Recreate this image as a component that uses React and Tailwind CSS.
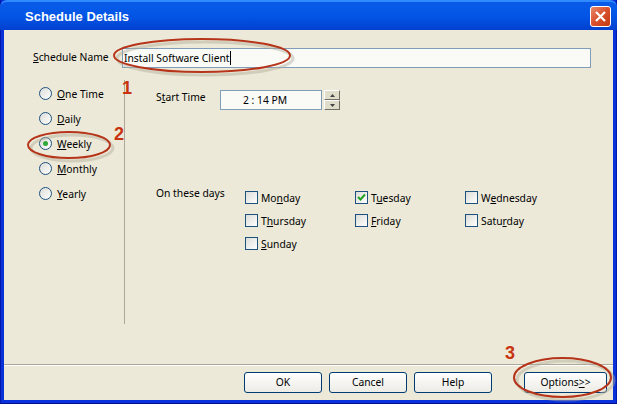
import React from "react";

const RADIOS = [
	{ pre: "", key: "O", rest: "ne Time" },
	{ pre: "", key: "D", rest: "aily" },
	{ pre: "", key: "W", rest: "eekly", checked: true },
	{ pre: "", key: "M", rest: "onthly" },
	{ pre: "", key: "Y", rest: "early" },
];

const DAYS = [
	{ pre: "Mo", key: "n", rest: "day" },
	{ pre: "T", key: "u", rest: "esday", checked: true },
	{ pre: "W", key: "e", rest: "dnesday" },
	{ pre: "T", key: "h", rest: "ursday" },
	{ pre: "", key: "F", rest: "riday" },
	{ pre: "Satu", key: "r", rest: "day" },
	{ pre: "", key: "S", rest: "unday" },
];

function Label({ pre, k, rest, className = "" }) {
	return (
		<span className={className}>
			{pre}
			<u>{k}</u>
			{rest}
		</span>
	);
}

function Radio({ item }) {
	return (
		<div className="flex items-center gap-[5px] h-[25px]">
			<div className="w-[13px] h-[13px] rounded-full border border-[#1c5180] bg-gradient-to-br from-[#dcdcd7] to-white flex items-center justify-center shrink-0">
				{item.checked && (
					<div className="w-[5px] h-[5px] rounded-full bg-[#2fa83a]" />
				)}
			</div>
			<Label className="mt-[2px]" pre={item.pre} k={item.key} rest={item.rest} />
		</div>
	);
}

function Day({ item }) {
	return (
		<div className="flex items-center gap-[3px] h-[13px]">
			<div className="w-[13px] h-[13px] border border-[#1c5180] bg-gradient-to-br from-[#dcdcd7] to-white flex items-center justify-center shrink-0">
				{item.checked && (
					<svg width="9" height="9" viewBox="0 0 9 9">
						<path d="M1 4 L3.5 6.5 L8 1.5" fill="none" stroke="#21a121" strokeWidth="2" />
					</svg>
				)}
			</div>
			<Label className="mt-[2px]" pre={item.pre} k={item.key} rest={item.rest} />
		</div>
	);
}

function Btn({ className, children }) {
	return (
		<div
			className={`h-[21px] rounded-[3px] border border-[#003c74] bg-gradient-to-b from-white to-[#ecebe5] flex items-center justify-center ${className}`}
		>
			{children}
		</div>
	);
}

function Spin({ up }) {
	return (
		<div className="w-[16px] h-[10px] bg-[#e0ddcb] border-t border-l border-t-white border-l-white border-r border-b border-r-[#716f64] border-b-[#716f64] flex items-center justify-center">
			<svg width="5" height="3" viewBox="0 0 5 3">
				<path d={up ? "M2.5 0 L5 3 L0 3 Z" : "M0 0 L5 0 L2.5 3 Z"} fill="#444" />
			</svg>
		</div>
	);
}

function Oval({ left, top, w, h, stroke = 2 }) {
	return (
		<svg
			className="absolute"
			style={{ left, top }}
			width={w + 8}
			height={h + 8}
		>
			<ellipse
				cx={w / 2 + 3}
				cy={h / 2 + 3}
				rx={w / 2 - 1}
				ry={h / 2 - 1}
				fill="none"
				stroke="#b0ad98"
				strokeOpacity="0.45"
				strokeWidth="3"
			/>
			<ellipse
				cx={w / 2}
				cy={h / 2}
				rx={w / 2 - 1}
				ry={h / 2 - 1}
				fill="none"
				stroke="#b5341a"
				strokeWidth={stroke}
			/>
		</svg>
	);
}

function Num({ className, children }) {
	return (
		<div
			className={`absolute font-['Liberation_Sans',sans-serif] font-bold text-[18px] leading-none text-[#c8330f] ${className}`}
		>
			{children}
		</div>
	);
}

export default function App() {
	return (
		<div className="relative w-[617px] h-[404px] overflow-hidden flex flex-col bg-[#0831d9] shadow-[inset_1px_0_0_#0019a8,inset_-1px_0_0_#0019a8,inset_0_-1px_0_#001090] font-['Noto_Sans',sans-serif] text-[10.3px] leading-[13px] text-black">
			{/* Title bar */}
			<div className="h-[30px] shrink-0 rounded-t-[7px] bg-gradient-to-b from-[#0a5be8] via-[#0355e6] to-[#0240cf] border-t-2 border-t-[#2f8bff] flex items-center justify-between pl-[25px] pr-[6px]">
				<span className="font-['Liberation_Sans',sans-serif] font-bold text-[13px] text-white">
					Schedule Details
				</span>
				<div className="w-[21px] h-[21px] rounded-[3px] border border-white bg-gradient-to-br from-[#e8866a] via-[#d9502c] to-[#c23a12] flex items-center justify-center">
					<svg width="11" height="11" viewBox="0 0 11 11">
						<path d="M1 1 L10 10 M10 1 L1 10" stroke="white" strokeWidth="2.2" />
					</svg>
				</div>
			</div>

			{/* Client area */}
			<div className="flex-1 mx-[4px] mb-[4px] bg-[#ece9d8] flex flex-col">
				<div className="flex items-center h-[20px] mt-[18px] pl-[29px] pr-[22px]">
					<div className="w-[89px] -mt-[1px]">
						<Label pre="" k="S" rest="chedule Name" />
					</div>
					<div className="flex-1 h-[20px] border border-[#7f9db9] bg-[#fafaf7] flex items-center pl-[1px]">
						Install Software Client
						<span className="w-px h-[14px] bg-black" />
					</div>
				</div>

				<div className="flex flex-1 mt-[12px]">
					<div className="w-[121px] h-[244px] border-r border-r-[#aca899] border-solid shrink-0 pl-[35px] pt-[1px]">
						{RADIOS.map((r) => (
							<Radio key={r.key} item={r} />
						))}
					</div>
					<div className="flex-1 pl-[31px]">
						<div className="flex items-center h-[20px] mt-[10px]">
							<div className="w-[64px] -mt-[6px]">
								<Label pre="S" k="t" rest="art Time" />
							</div>
							<div className="w-[102px] h-[20px] border border-[#7f9db9] bg-[#fafaf7] flex items-center justify-center pr-[12px]">
								2 : 14 PM
							</div>
							<div className="ml-[2px] flex flex-col">
								<Spin up />
								<Spin />
							</div>
						</div>
						<div className="flex mt-[81px]">
							<div className="w-[89px] -mt-[4px]">On these days</div>
							<div className="grid grid-cols-[110px_110px_110px] gap-y-[10px]">
								{DAYS.map((d) => (
									<Day key={d.pre + d.key} item={d} />
								))}
							</div>
						</div>
					</div>
				</div>

				{/* Footer */}
				<div className="h-[36px] shrink-0 border-t border-t-[#aca899]">
					<div className="h-[36px] border-t border-t-white flex pt-[6px] pl-[240px] gap-[7px]">
						<Btn className="w-[78px]">OK</Btn>
						<Btn className="w-[78px]">Cancel</Btn>
						<Btn className="w-[78px]">Help</Btn>
						<Btn className="w-[83px] ml-[25px]">
							<Label pre="Options" k=">" rest=">" />
						</Btn>
					</div>
				</div>
			</div>

			{/* Callouts drawn over the screenshot */}
			<Oval left={113} top={38} w={178} h={35} />
			<Oval left={27} top={131} w={84} h={28} />
			<Oval left={513} top={357} w={99} h={41} />
			<Num className="left-[122px] top-[79px]">1</Num>
			<Num className="left-[114px] top-[125px]">2</Num>
			<Num className="left-[505px] top-[344px]">3</Num>
		</div>
	);
}
